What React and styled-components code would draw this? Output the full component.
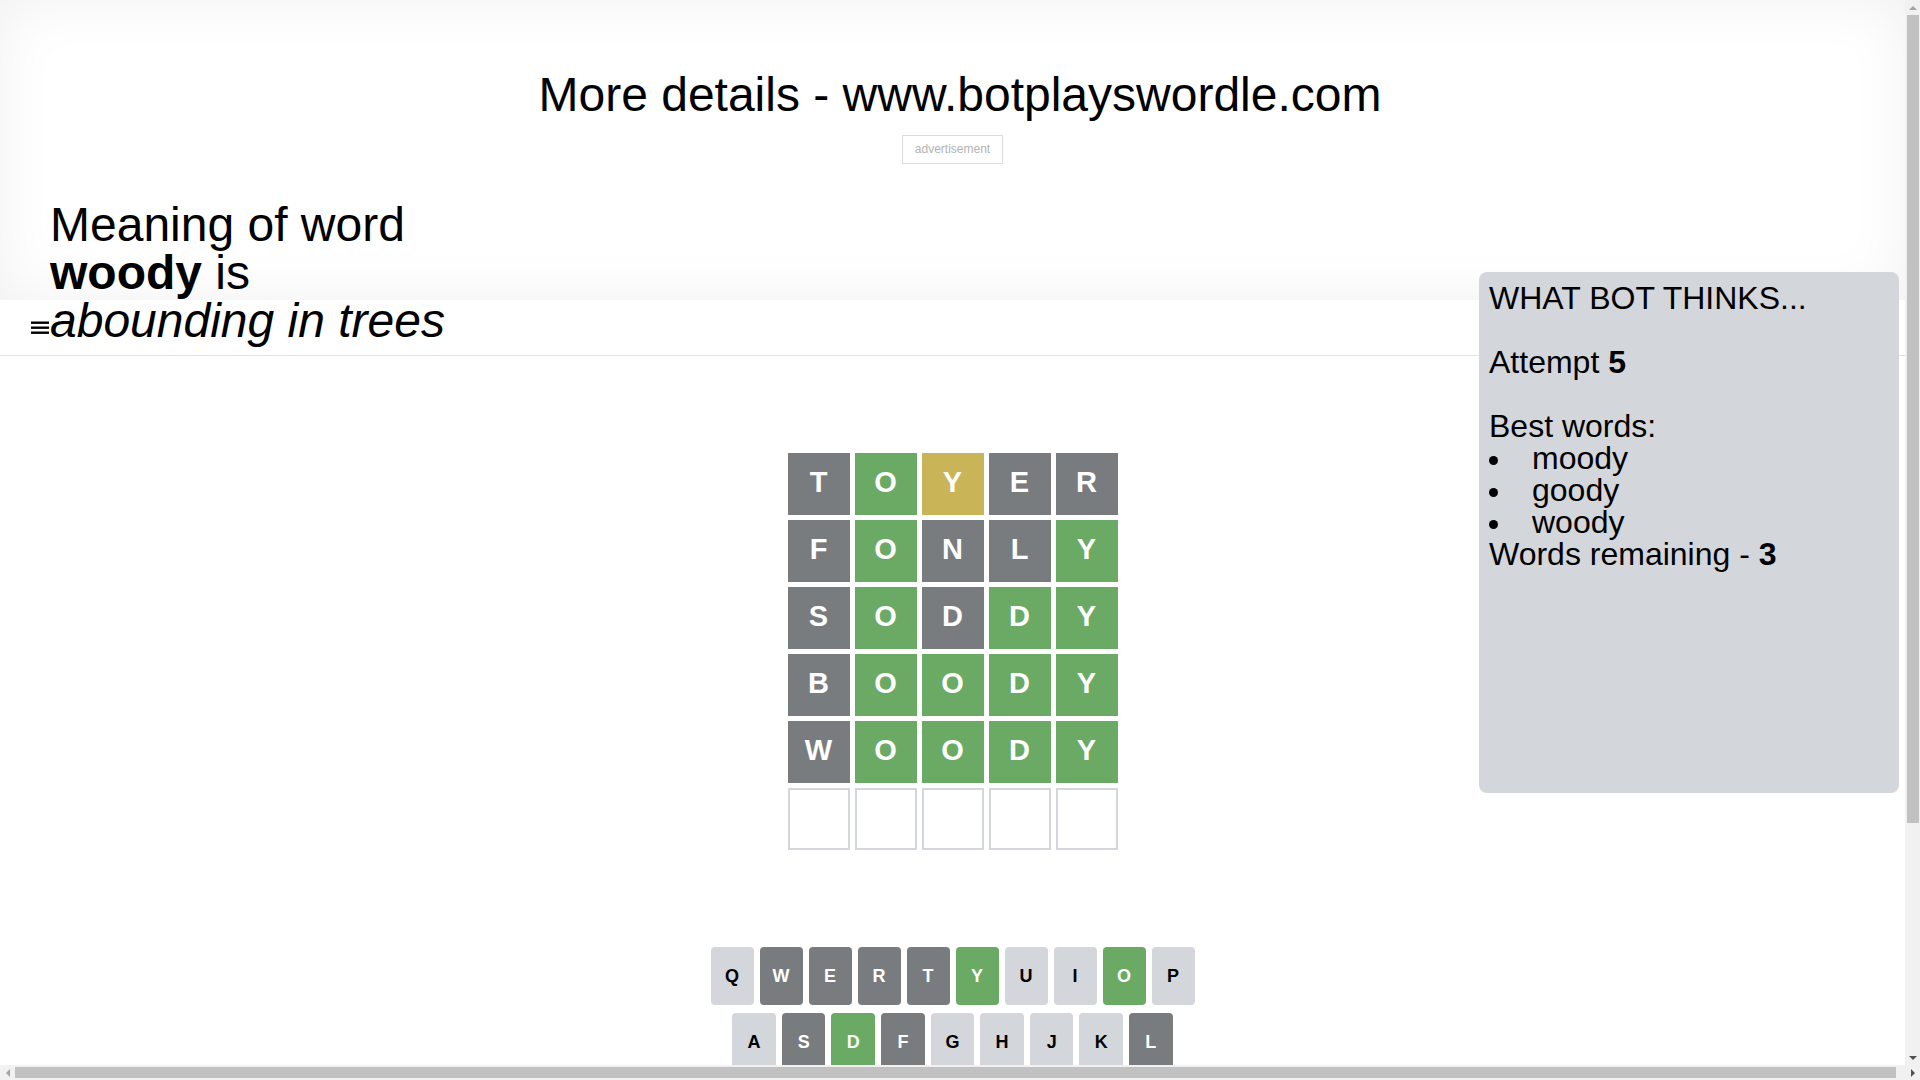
import React from "react";
import styled, { createGlobalStyle, css } from "styled-components";

const GlobalStyle = createGlobalStyle`
  html, body, #root {
    height: 100%;
  }
  body {
    margin: 0;
    overflow: hidden;
    font-family: "Liberation Sans", Arial, Helvetica, sans-serif;
    color: #000;
  }
  * {
    box-sizing: border-box;
  }
`;

// browser window: page + classic scrollbars
const Viewport = styled.div`
  width: 100vw;
  height: 100vh;
  display: grid;
  grid-template-columns: 1fr 15px;
  grid-template-rows: 1fr 15px;
  overflow: hidden;
`;

const Page = styled.div`
  position: relative;
  min-height: 0;
  overflow: hidden;
  background: #fff;
`;

const VScroll = styled.div`
  background: #f1f1f1;
  display: flex;
  flex-direction: column;
`;

const HScroll = styled.div`
  grid-column: 1 / -1;
  background: #f1f1f1;
  display: flex;
`;

const ArrowBox = styled.div`
  width: 15px;
  height: 15px;
  flex-shrink: 0;
  display: flex;
  align-items: center;
  justify-content: center;
  margin-top: ${(p) => (p.$push ? "auto" : "0")};
  margin-left: ${(p) => (p.$pushX ? "auto" : "0")};
`;

const arrowShapes = {
  up: css`
    border-left: 4px solid transparent;
    border-right: 4px solid transparent;
    border-bottom: 4px solid #a3a3a3;
  `,
  down: css`
    border-left: 4px solid transparent;
    border-right: 4px solid transparent;
    border-top: 4px solid #505050;
  `,
  left: css`
    border-top: 4px solid transparent;
    border-bottom: 4px solid transparent;
    border-right: 4px solid #a3a3a3;
  `,
  right: css`
    border-top: 4px solid transparent;
    border-bottom: 4px solid transparent;
    border-left: 4px solid #505050;
  `,
};

const Arrow = styled.span`
  width: 0;
  height: 0;
  ${(p) => arrowShapes[p.$dir]}
`;

const VThumb = styled.div`
  height: 808px;
  margin: 0 1px 0 2px;
  background: #c1c1c1;
`;

const HThumb = styled.div`
  width: 1881px;
  height: 11px;
  margin-top: 2px;
  background: #c1c1c1;
`;

const Header = styled.header`
  height: 300px;
  padding-top: 71px;
  display: flex;
  flex-direction: column;
  align-items: center;
  box-shadow: inset 0 0 60px rgba(0, 0, 0, 0.06);
`;

const Title = styled.h1`
  margin: 0 0 0 15px;
  font-size: 48px;
  line-height: 48px;
  font-weight: 400;
`;

const Ad = styled.div`
  margin-top: 16px;
  padding: 6px 12px;
  border: 1px solid #dcdcdc;
  font-size: 12px;
  line-height: 15px;
  color: #b3b3b3;
`;

const Meaning = styled.div`
  align-self: stretch;
  margin-top: 37px;
  padding-left: 50px;
  font-size: 48px;
  line-height: 48px;
  position: relative;
  z-index: 1;

  b {
    font-weight: 700;
  }
`;

const Game = styled.main`
  height: 847px;
  margin-bottom: 218px;
  display: flex;
  flex-direction: column;
`;

const GameHeader = styled.div`
  height: 56px;
  flex-shrink: 0;
  padding-left: 31px;
  display: flex;
  align-items: center;
  border-bottom: 1px solid #e3e3e3;
`;

const BoardWrap = styled.div`
  flex-grow: 1;
  display: flex;
  justify-content: center;
  align-items: center;
`;

const Board = styled.div`
  display: grid;
  grid-template-rows: repeat(6, 62px);
  gap: 5px;
`;

const BoardRow = styled.div`
  display: grid;
  grid-template-columns: repeat(5, 62px);
  gap: 5px;
`;

const colors = {
  correct: "#6aaa64",
  present: "#c9b458",
  absent: "#787c7e",
  idle: "#d3d6da",
};

const Tile = styled.div`
  display: flex;
  align-items: center;
  justify-content: center;
  padding-bottom: 4px;
  font-size: 29px;
  font-weight: 700;
  color: #fff;
  border: 2px solid ${(p) => (p.$state ? colors[p.$state] : "#d3d6da")};
  background: ${(p) => (p.$state ? colors[p.$state] : "#fff")};
`;

const Keyboard = styled.div`
  width: 500px;
  height: 200px;
  flex-shrink: 0;
  margin: 0 auto;
  padding: 0 8px;
`;

const KeyRow = styled.div`
  display: flex;
  height: 58px;
  margin-bottom: 8px;
`;

const Spacer = styled.div`
  flex: 0.5;
`;

const Key = styled.button`
  flex: ${(p) => (p.$wide ? 1.5 : 1)};
  margin-right: 6px;
  padding: 0;
  border: 0;
  border-radius: 4px;
  display: flex;
  align-items: center;
  justify-content: center;
  font-family: inherit;
  font-size: ${(p) => (p.$wide ? "12px" : "18px")};
  font-weight: 700;
  ${(p) =>
    p.$state && p.$state !== "idle"
      ? css`
          background: ${colors[p.$state]};
          color: #fff;
        `
      : css`
          background: ${colors.idle};
          color: #000;
        `}

  &:last-of-type {
    margin-right: 0;
  }
`;

const Panel = styled.aside`
  position: absolute;
  top: 272px;
  right: 6px;
  width: 420px;
  height: 521px;
  padding: 10px;
  border-radius: 8px;
  background: #d3d6da;
  font-size: 32px;
  line-height: 32px;
`;

const Words = styled.ul`
  margin: 0;
  padding: 0;
  list-style: none;

  li::before {
    content: "";
    display: inline-block;
    width: 9px;
    height: 9px;
    margin-right: 34px;
    border-radius: 50%;
    background: #000;
    vertical-align: middle;
  }
`;

const MenuIcon = () => (
  <svg width="18" height="13" viewBox="0 0 18 13">
    <rect x="0" y="0.5" width="18" height="2.4" fill="#000" />
    <rect x="0" y="5.5" width="18" height="2.4" fill="#000" />
    <rect x="0" y="10.5" width="18" height="2.4" fill="#000" />
  </svg>
);

const BackIcon = () => (
  <svg width="24" height="24" viewBox="0 0 24 24">
    <path
      fill="#000"
      d="M22 3H7c-.69 0-1.23.35-1.59.88L0 12l5.41 8.11c.36.53.9.89 1.59.89h15c1.1 0 2-.9 2-2V5c0-1.1-.9-2-2-2zm0 16H7.07L2.4 12l4.66-7H22v14zm-11.59-2L14 13.41 17.59 17 19 15.590 15.41 12 19 8.41 17.59 7 14 10.59 10.41 7 9 8.41 12.59 12 9 15.59z"
    />
  </svg>
);

const G = "absent";
const C = "correct";
const P = "present";

const guesses = [
  [["T", G], ["O", C], ["Y", P], ["E", G], ["R", G]],
  [["F", G], ["O", C], ["N", G], ["L", G], ["Y", C]],
  [["S", G], ["O", C], ["D", G], ["D", C], ["Y", C]],
  [["B", G], ["O", C], ["O", C], ["D", C], ["Y", C]],
  [["W", G], ["O", C], ["O", C], ["D", C], ["Y", C]],
  [["", null], ["", null], ["", null], ["", null], ["", null]],
];

const keyStates = {
  W: G, E: G, R: G, T: G, S: G, F: G, L: G, B: G, N: G,
  Y: C, O: C, D: C,
};

const row1 = "QWERTYUIOP".split("");
const row2 = "ASDFGHJKL".split("");
const row3 = "ZXCVBNM".split("");

const App = () => {
  return (
    <Viewport>
      <GlobalStyle />
      <Page>
        <Header>
          <Title>More details - www.botplayswordle.com</Title>
          <Ad>advertisement</Ad>
          <Meaning>
            Meaning of word
            <br />
            <b>woody</b> is
            <br />
            <i>abounding in trees</i>
          </Meaning>
        </Header>

        <Game>
          <GameHeader>
            <MenuIcon />
          </GameHeader>

          <BoardWrap>
            <Board>
              {guesses.map((row, i) => (
                <BoardRow key={i}>
                  {row.map(([letter, state], j) => (
                    <Tile key={j} $state={state}>
                      {letter}
                    </Tile>
                  ))}
                </BoardRow>
              ))}
            </Board>
          </BoardWrap>

          <Keyboard>
            <KeyRow>
              {row1.map((k) => (
                <Key key={k} $state={keyStates[k]}>
                  {k}
                </Key>
              ))}
            </KeyRow>
            <KeyRow>
              <Spacer />
              {row2.map((k) => (
                <Key key={k} $state={keyStates[k]}>
                  {k}
                </Key>
              ))}
              <Spacer />
            </KeyRow>
            <KeyRow>
              <Key $wide>ENTER</Key>
              {row3.map((k) => (
                <Key key={k} $state={keyStates[k]}>
                  {k}
                </Key>
              ))}
              <Key $wide>
                <BackIcon />
              </Key>
            </KeyRow>
          </Keyboard>
        </Game>

        <Panel>
          WHAT BOT THINKS...
          <br />
          <br />
          Attempt <b>5</b>
          <br />
          <br />
          Best words:
          <Words>
            <li>moody</li>
            <li>goody</li>
            <li>woody</li>
          </Words>
          Words remaining - <b>3</b>
        </Panel>
      </Page>

      <VScroll>
        <ArrowBox>
          <Arrow $dir="up" />
        </ArrowBox>
        <VThumb />
        <ArrowBox $push>
          <Arrow $dir="down" />
        </ArrowBox>
      </VScroll>

      <HScroll>
        <ArrowBox>
          <Arrow $dir="left" />
        </ArrowBox>
        <HThumb />
        <ArrowBox $pushX>
          <Arrow $dir="right" />
        </ArrowBox>
      </HScroll>
    </Viewport>
  );
};

export default App;
